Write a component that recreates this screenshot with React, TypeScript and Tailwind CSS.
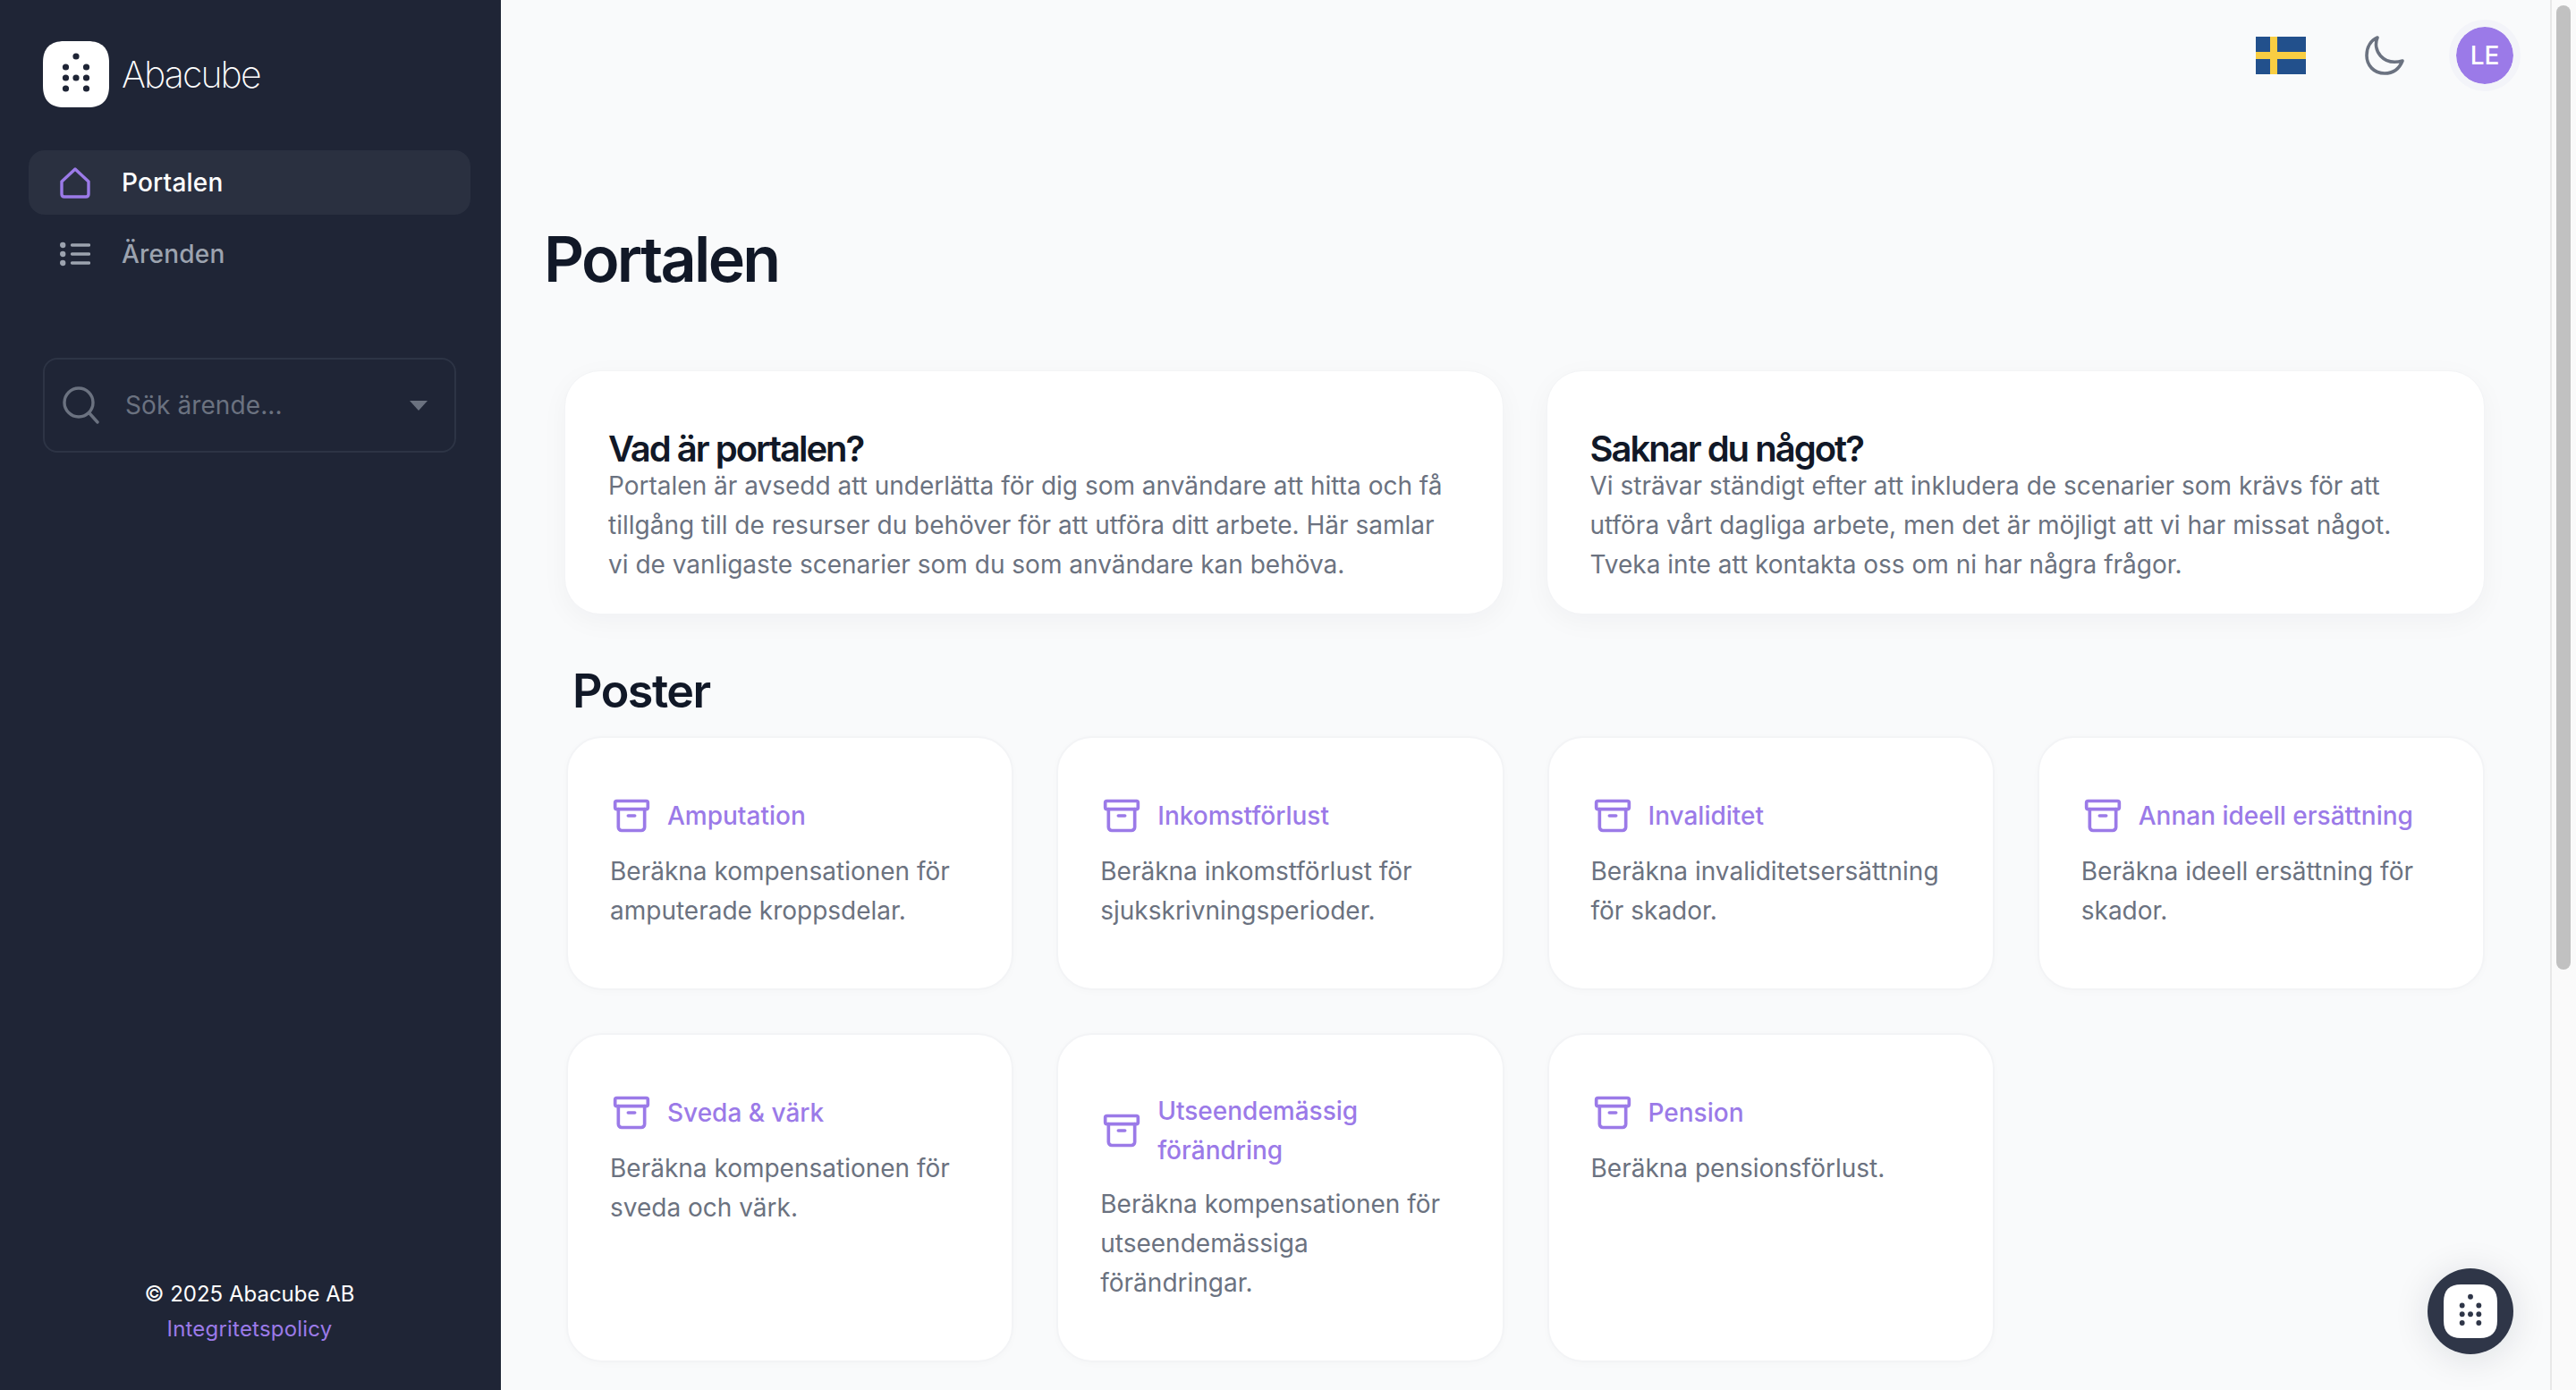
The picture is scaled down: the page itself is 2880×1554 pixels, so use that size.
import React from "react";

const Logo = ({ className, fill, dot }: { className: string; fill: string; dot: string }) => (
  <svg viewBox="0 0 74 74" className={className}>
    <path d="M24 0H50C66 0 74 8 74 24V50C74 66 66 74 50 74H24C8 74 0 66 0 50V24C0 8 8 0 24 0Z" fill={fill} />
    {[
      [37, 17],
      [25.5, 29],
      [48.5, 29],
      [25.5, 41],
      [37, 41],
      [48.5, 41],
      [25.5, 53],
      [48.5, 53],
    ].map(([x, y]) => (
      <circle key={`${x}-${y}`} cx={x} cy={y} r="3.6" fill={dot} />
    ))}
  </svg>
);

const ArchiveIcon = () => (
  <svg viewBox="0 0 24 24" fill="none" stroke="#9b7ae8" strokeWidth="2" strokeLinecap="round" strokeLinejoin="round" className="ml-[2px] h-[44px] w-[44px] shrink-0">
    <rect x="2" y="3" width="20" height="5" rx="1" />
    <path d="M4 8v11a2 2 0 0 0 2 2h12a2 2 0 0 0 2-2V8" />
    <path d="M10 12h4" />
  </svg>
);

const posts = [
  ["Amputation", "Beräkna kompensationen för amputerade kroppsdelar."],
  ["Inkomstförlust", "Beräkna inkomstförlust för sjukskrivningsperioder."],
  ["Invaliditet", "Beräkna invaliditetsersättning för skador."],
  ["Annan ideell ersättning", "Beräkna ideell ersättning för skador."],
  ["Sveda & värk", "Beräkna kompensationen för sveda och värk."],
  ["Utseendemässig förändring", "Beräkna kompensationen för utseendemässiga förändringar."],
  ["Pension", "Beräkna pensionsförlust."],
];

const intro = [
  [
    "Vad är portalen?",
    "Portalen är avsedd att underlätta för dig som användare att hitta och få tillgång till de resurser du behöver för att utföra ditt arbete. Här samlar vi de vanligaste scenarier som du som användare kan behöva.",
  ],
  [
    "Saknar du något?",
    "Vi strävar ständigt efter att inkludera de scenarier som krävs för att utföra vårt dagliga arbete, men det är möjligt att vi har missat något. Tveka inte att kontakta oss om ni har några frågor.",
  ],
];

export default function App() {
  return (
    <div className="relative flex h-screen overflow-hidden bg-[#f9fafb] font-['Inter',sans-serif] text-[28px] leading-[44px] text-[#6b7280]">
      <aside className="flex w-[560px] shrink-0 flex-col justify-between bg-[#1f2536] pb-[52px] pl-[32px] pr-[34px] pt-[46px]">
        <div>
          <div className="flex items-center gap-[14px] pl-[16px]">
            <Logo className="h-[74px] w-[74px]" fill="#ffffff" dot="#1f2536" />
            <span className="text-[41px] font-extralight leading-[74px] tracking-[-1.9px] text-white">Abacube</span>
          </div>
          <nav className="mt-[48px] flex flex-col gap-[8px]">
            <div className="flex h-[72px] items-center gap-[35px] rounded-[18px] bg-[#2a3040] pl-[35px] font-medium tracking-[0.2px] text-white">
              <svg viewBox="0 0 34 35" fill="none" stroke="#9b7ae8" strokeWidth="3.4" strokeLinejoin="round" className="h-[35px] w-[34px]">
                <path d="M17 2L2 16V30Q2 33 5 33H29Q32 33 32 30V16Z" />
              </svg>
              <span>Portalen</span>
            </div>
            <div className="flex h-[72px] items-center gap-[35px] pl-[35px] font-medium tracking-[0.2px] text-[#9ca3af]">
              <svg viewBox="0 0 34 28" fill="none" stroke="#9ca3af" strokeWidth="3.4" strokeLinecap="round" className="h-[28px] w-[34px]">
                <path d="M13.5 4H32.5M13.5 14H32.5M13.5 24H32.5" />
                <circle cx="3.2" cy="4" r="1.5" fill="#9ca3af" />
                <circle cx="3.2" cy="14" r="1.5" fill="#9ca3af" />
                <circle cx="3.2" cy="24" r="1.5" fill="#9ca3af" />
              </svg>
              <span>Ärenden</span>
            </div>
          </nav>
          <div className="ml-[16px] mt-[80px] flex h-[106px] w-[462px] items-center rounded-[16px] border-2 border-[#2d3445] pl-[20px] pr-[30px] text-[#6b7280]">
            <svg viewBox="0 0 42 42" fill="none" stroke="#6b7280" strokeWidth="3.4" strokeLinecap="round" className="h-[42px] w-[42px]">
              <circle cx="18" cy="18" r="16" />
              <path d="M30 30L39 40" />
            </svg>
            <span className="ml-[28px] flex-1 tracking-[0.1px]">Sök ärende...</span>
            <svg viewBox="0 0 20 11" fill="#6b7280" className="h-[11px] w-[20px]">
              <path d="M0 0H20L10 11Z" />
            </svg>
          </div>
        </div>
        <div className="flex flex-col items-center text-center">
          <span className="text-[24px] leading-[36px] text-white">© 2025 Abacube AB</span>
          <span className="mt-[5px] text-[24px] leading-[32px] tracking-[0.2px] text-[#9b7ae8]">Integritetspolicy</span>
        </div>
      </aside>

      <main className="min-w-0 flex-1 pl-[72px] pr-[74px]">
        <header className="flex h-[124px] items-center justify-end">
          <svg viewBox="0 0 56 42" className="h-[42px] w-[56px]">
            <rect width="56" height="42" fill="#22508c" />
            <rect x="16" width="8" height="42" fill="#f8cd42" />
            <rect y="17" width="56" height="8" fill="#f8cd42" />
          </svg>
          <svg viewBox="0 0 44 44" fill="none" stroke="#6b7280" strokeWidth="3.6" strokeLinecap="round" strokeLinejoin="round" className="ml-[66px] h-[44px] w-[44px]">
            <path d="M14 2C8 16 20 34 42 28C38 38 30 42 22 42C10 42 2 33 2 22C2 12 7 5 14 2Z" />
          </svg>
          <div className="ml-[50px] mr-[-41px] flex h-[80px] w-[80px] items-center justify-center rounded-full border-[8px] border-[#f3f4f9] bg-[#9b7ae8] bg-clip-padding text-[28px] font-medium text-white">
            LE
          </div>
        </header>

        <h1 className="-ml-[24px] mt-[126px] text-[70px] font-semibold leading-[80px] tracking-[-2.7px] text-[#111827]">Portalen</h1>

        <section className="-mx-[1px] mt-[84px] grid grid-cols-2 gap-[48px]">
          {intro.map(([title, body]) => (
            <div key={title} className="rounded-[40px] border border-[#f3f4f6] bg-white pb-[33px] pl-[48px] pr-[47px] pt-[68px] shadow-[0_8px_30px_rgba(17,24,39,0.04)]">
              <h2 className="text-[40px] font-semibold leading-[38px] tracking-[-2px] text-[#111827]">{title}</h2>
              <p>{body}</p>
            </div>
          ))}
        </section>

        <h2 className="ml-[8px] mt-[54px] text-[52px] font-semibold leading-[64px] tracking-[-1.5px] text-[#111827]">Poster</h2>

        <section className="ml-[1px] mr-[-1px] mt-[18px] grid grid-cols-4 gap-[48px]">
          {posts.map(([title, body]) => (
            <div key={title} className="rounded-[40px] border-2 border-[#f3f4f6] bg-white pb-[65px] pl-[47px] pr-[46px] pt-[63px] shadow-[0_2px_8px_rgba(17,24,39,0.02)]">
              <div className="flex min-h-[48px] items-center gap-[18px] text-[#9b7ae8]">
                <ArchiveIcon />
                <span className="font-medium">{title}</span>
              </div>
              <p className="mt-[16px]">{body}</p>
            </div>
          ))}
        </section>
      </main>

      <div className="w-[29px] shrink-0 border-l-2 border-[#e8e8e8] bg-[#fafafa] pl-[5px] pt-[6px]">
        <div className="h-[1078px] w-[16px] rounded-full bg-[#c1c1c1]" />
      </div>

      <div className="absolute left-[2714px] top-[1418px] flex h-[96px] w-[96px] items-center justify-center rounded-full bg-[#2f3648] shadow-[0_4px_40px_rgba(17,24,39,0.12)]">
        <Logo className="h-[60px] w-[60px]" fill="#ffffff" dot="#2f3648" />
      </div>
    </div>
  );
}
